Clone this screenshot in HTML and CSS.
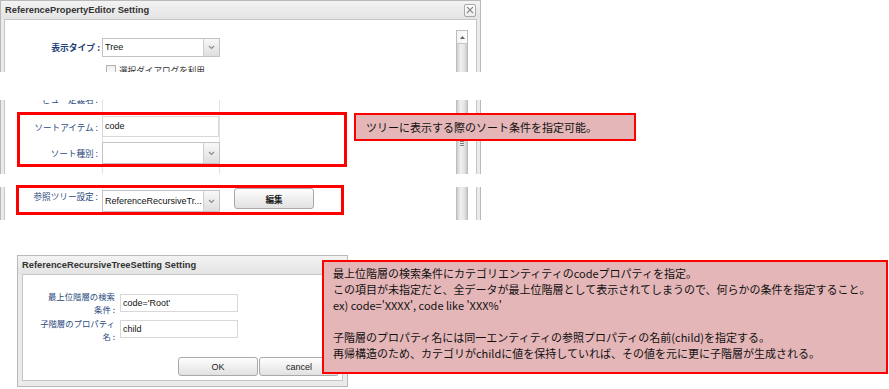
FILE: index.html
```html
<!DOCTYPE html>
<html lang="ja">
<head>
    <meta charset="UTF-8">
    <title>ReferencePropertyEditor Setting</title>
    <link rel="stylesheet" href="styles.css">
</head>
<body>
<div class="sheet">

    <!-- top of the property editor dialog -->
    <section class="clip clip-head">
        <div class="dlg">
            <div class="dlg-title">
                <span>ReferencePropertyEditor Setting</span>
                <span class="dlg-close">
                    <svg width="8" height="8" viewBox="0 0 8 8"><path d="M1 1L7 7M7 1L1 7" stroke="#8a8a8a" stroke-width="1.1"/></svg>
                </span>
            </div>
            <div class="dlg-panel">
                <div class="form">
                    <div class="row row-type">
                        <label class="lbl lbl-strong">表示タイプ :</label>
                        <div class="select">
                            <span class="select-val">Tree</span>
                            <span class="select-btn"><svg width="7" height="5" viewBox="0 0 7 5"><path d="M1 1L3.5 3.5L6 1" fill="none" stroke="#8c8c8c" stroke-width="1.2"/></svg></span>
                        </div>
                    </div>
                    <div class="row-check"><span class="check"></span>選択ダイアログを利用</div>
                </div>
                <div class="vscroll vscroll-top"><span class="vscroll-up"><svg width="5" height="3" viewBox="0 0 5 3"><path d="M0 3L2.5 0L5 3Z" fill="#666"/></svg></span></div>
            </div>
        </div>
    </section>

    <!-- sort settings -->
    <section class="clip clip-sort">
        <div class="dlg dlg-cut">
            <div class="dlg-panel">
                <div class="form form-lines">
                    <div class="row row-cut">
                        <label class="lbl">ビュー定義名 :</label>
                    </div>
                    <div class="row row-sort">
                        <label class="lbl">ソートアイテム :</label>
                        <div class="input">code</div>
                    </div>
                    <div class="row row-sorttype">
                        <label class="lbl">ソート種別 :</label>
                        <div class="select select-tall">
                            <span class="select-val"></span>
                            <span class="select-btn"><svg width="7" height="5" viewBox="0 0 7 5"><path d="M1 1L3.5 3.5L6 1" fill="none" stroke="#8c8c8c" stroke-width="1.2"/></svg></span>
                        </div>
                    </div>
                </div>
                <div class="vscroll"><span class="grip"></span></div>
            </div>
        </div>
    </section>

    <!-- reference tree setting -->
    <section class="clip clip-tree">
        <div class="dlg dlg-cut">
            <div class="dlg-panel">
                <div class="form">
                    <div class="row row-tree">
                        <label class="lbl">参照ツリー設定 :</label>
                        <div class="select select-tall">
                            <span class="select-val">ReferenceRecursiveTr...</span>
                            <span class="select-btn"><svg width="7" height="5" viewBox="0 0 7 5"><path d="M1 1L3.5 3.5L6 1" fill="none" stroke="#8c8c8c" stroke-width="1.2"/></svg></span>
                        </div>
                        <button class="btn btn-edit">編集</button>
                    </div>
                </div>
                <div class="vscroll"></div>
            </div>
        </div>
    </section>

    <!-- recursive tree setting dialog -->
    <section class="dlg dlg-sub">
        <div class="dlg-title"><span>ReferenceRecursiveTreeSetting Setting</span></div>
        <div class="dlg-panel">
            <div class="form form-sub">
                <div class="row-sub row-sub-first">
                    <label class="lbl lbl-sub">最上位階層の検索<br>条件 :</label>
                    <div class="input input-sub">code='Root'</div>
                </div>
                <div class="row-sub">
                    <label class="lbl lbl-sub">子階層のプロパティ<br>名 :</label>
                    <div class="input input-sub">child</div>
                </div>
                <div class="btn-bar">
                    <button class="btn btn-dlg">OK</button>
                    <button class="btn btn-dlg">cancel</button>
                </div>
            </div>
        </div>
    </section>

    <!-- highlights and notes -->
    <div class="mark mark-sort"></div>
    <div class="mark mark-tree"></div>

    <div class="note note-sort">ツリーに表示する際のソート条件を指定可能。</div>
    <div class="note note-tree">
        最上位階層の検索条件にカテゴリエンティティのcodeプロパティを指定。<br>
        この項目が未指定だと、全データが最上位階層として表示されてしまうので、何らかの条件を指定すること。<br>
        ex) code='XXXX', code like 'XXX%'<br>
        <br>
        子階層のプロパティ名には同一エンティティの参照プロパティの名前(child)を指定する。<br>
        再帰構造のため、カテゴリがchildに値を保持していれば、その値を元に更に子階層が生成される。
    </div>
</div>
</body>
</html>
```

FILE: styles.css
```css
body {
    margin: 0;
    background: #fff;
    font-family: "Liberation Sans", Arial, "Noto Sans CJK JP", sans-serif;
    color: #222;
}
.sheet {
    position: relative;
    width: 889px;
    height: 389px;
    overflow: hidden;
}

/* cropped pieces of the dialog */
.clip {
    width: 481px;
    overflow: hidden;
}
.clip-head {
    height: 72px;
}
.clip-sort {
    height: 74px;
    margin-top: 28px;
}
.clip-tree {
    height: 33px;
    margin-top: 13px;
}

.dlg {
    box-sizing: border-box;
    width: 481px;
    height: 240px;
    background: #ebebeb;
    border: 1px solid #b9b9b9;
}
.dlg-cut {
    border-top: none;
}
.dlg-title {
    display: flex;
    justify-content: space-between;
    align-items: center;
    height: 18px;
    padding: 0 4px 0 4px;
    background: linear-gradient(#f3f3f3, #e3e3e3);
    font-size: 9.3px;
    font-weight: bold;
    color: #333;
}
.dlg-close {
    display: flex;
    align-items: center;
    justify-content: center;
    width: 10px;
    height: 11px;
    border: 1px solid #a8a8a8;
    border-radius: 2px;
    background: linear-gradient(#fff, #ececec);
}
.dlg-panel {
    display: flex;
    height: 220px;
    margin: 0 3px;
    background: #fff;
    border: 1px solid #c6c6c6;
}
.dlg-cut .dlg-panel {
    border-top: none;
}

.form {
    flex: 1;
}
.form-lines {
    background:
        linear-gradient(#e2e2e2, #e2e2e2) 97px 0 / 1px 100% no-repeat,
        linear-gradient(#e2e2e2, #e2e2e2) 214px 0 / 1px 100% no-repeat;
}

.row {
    display: flex;
    align-items: center;
}
.lbl {
    box-sizing: border-box;
    width: 97px;
    padding-right: 4px;
    text-align: right;
    font-family: "Noto Sans CJK JP", sans-serif;
    font-size: 8.6px;
    color: #2b4a7e;
    white-space: nowrap;
}
.lbl-strong {
    width: 97px;
    padding-right: 2px;
    font-weight: bold;
    font-size: 8.8px;
    color: #1d3c73;
}

.row-type {
    margin-top: 18px;
}
.row-check {
    display: flex;
    align-items: center;
    margin: 7px 0 0 101px;
    font-family: "Noto Sans CJK JP", sans-serif;
    font-size: 8.6px;
    color: #333;
}
.check {
    width: 8px;
    height: 8px;
    margin-right: 3px;
    border: 1px solid #b3b3b3;
    background: linear-gradient(#eee, #fff);
}

.row-cut {
    height: 12px;
    margin-top: -7px;
}
.row-sort {
    margin-top: 11px;
}
.row-sorttype {
    margin-top: 5px;
}
.row-tree {
    align-items: flex-start;
    margin-top: 3px;
}

.select {
    box-sizing: border-box;
    display: flex;
    width: 118px;
    height: 19px;
    border: 1px solid #c4c4c4;
    background: #fff;
}
.select-tall {
    height: 22px;
}
.select-val {
    flex: 1;
    padding-left: 2px;
    overflow: hidden;
    white-space: nowrap;
    font-size: 9px;
    line-height: 17px;
    color: #111;
}
.select-tall .select-val {
    line-height: 20px;
}
.select-btn {
    display: flex;
    align-items: center;
    justify-content: center;
    width: 15px;
    border-left: 1px solid #cfcfcf;
    background: linear-gradient(#f8f8f8, #dedede);
}
.input {
    box-sizing: border-box;
    width: 117px;
    height: 21px;
    padding-left: 2px;
    border: 1px solid #d8d8d8;
    background: #fff;
    font-size: 9px;
    line-height: 19px;
    color: #111;
}

.btn {
    box-sizing: border-box;
    padding: 0;
    border: 1px solid #a9a9a9;
    border-radius: 3px;
    background: linear-gradient(#fefefe, #e1e1e1);
    font-family: "Noto Sans CJK JP", "Liberation Sans", sans-serif;
    color: #222;
}
.btn-edit {
    width: 80px;
    height: 21px;
    margin: -2px 0 0 14px;
    font-size: 8.6px;
    font-weight: bold;
}

/* scrollbar */
.vscroll {
    width: 12px;
    margin-right: 8px;
    background: linear-gradient(90deg, #cdcdcd, #efefef 35%, #e6e6e6 70%, #c9c9c9);
    border-left: 1px solid #bdbdbd;
    border-right: 1px solid #bdbdbd;
    box-sizing: border-box;
    position: relative;
}
.vscroll-top {
    margin-top: 10px;
    border-top: 1px solid #bdbdbd;
}
.vscroll-up {
    display: flex;
    align-items: center;
    justify-content: center;
    height: 12px;
    border-bottom: 1px solid #c4c4c4;
    background: linear-gradient(90deg, #f4f4f4, #fdfdfd);
}
.grip {
    position: absolute;
    left: 3px;
    top: 41px;
    width: 4px;
    height: 5px;
    background: repeating-linear-gradient(#7d7d7d 0 1px, transparent 1px 2px);
}

/* second dialog */
.dlg-sub {
    width: 331px;
    height: 132px;
    margin: 35px 0 0 17px;
}
.dlg-sub .dlg-title {
    padding-left: 4px;
}
.dlg-sub .dlg-panel {
    display: block;
    height: 105px;
    margin: 0 4px;
}
.form-sub {
    padding-top: 14px;
}
.row-sub {
    display: flex;
    align-items: flex-start;
    margin-top: 1px;
}
.lbl-sub {
    width: 97px;
    padding-right: 5px;
    line-height: 13px;
    font-size: 8.4px;
}
.input-sub {
    width: 118px;
    height: 18px;
    margin-top: 3px;
    line-height: 16px;
}
.row-sub-first .input-sub {
    margin-top: 4px;
}
.btn-bar {
    display: flex;
    gap: 1px;
    margin: 14px 0 0 155px;
}
.btn-dlg {
    width: 80px;
    height: 19px;
    font-family: "Liberation Sans", sans-serif;
    font-size: 9px;
}

/* red highlight frames */
.mark {
    position: absolute;
    box-sizing: border-box;
    border: 3px solid #f00;
}
.mark-sort {
    left: 17px;
    top: 112px;
    width: 330px;
    height: 55px;
}
.mark-tree {
    left: 16px;
    top: 185px;
    width: 328px;
    height: 30px;
}

/* notes */
.note {
    position: absolute;
    box-sizing: border-box;
    border: 2px solid #f00;
    background: #e4b6b8;
    font-family: "Noto Sans CJK JP", sans-serif;
    font-size: 11px;
    color: #111;
}
.note-sort {
    left: 354px;
    top: 113px;
    width: 282px;
    height: 28px;
    padding-left: 10px;
    line-height: 24px;
}
.note-tree {
    left: 322px;
    top: 260px;
    width: 566px;
    height: 114px;
    padding: 3px 0 0 9px;
    line-height: 16px;
}
```
